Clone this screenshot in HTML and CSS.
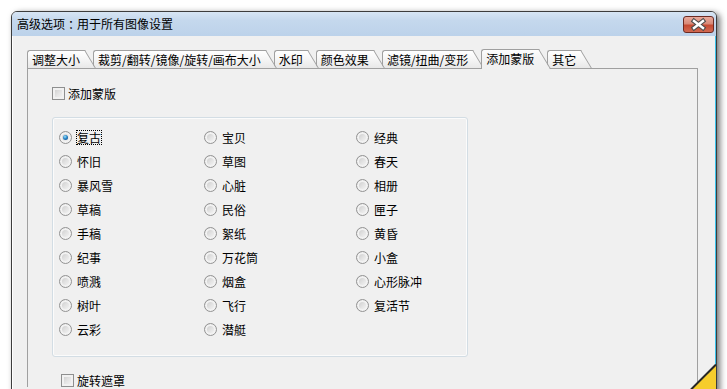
FILE: index.html
```html
<!DOCTYPE html>
<html lang="zh-CN">
<head>
  <meta charset="UTF-8">
  <title>高级选项</title>
  <link rel="stylesheet" href="styles.css">
</head>
<body>
  <div class="window">
    <div class="titlebar">
      <span class="title">高级选项<span class="colon">：</span>用于所有图像设置</span>
      <div class="close">
        <svg width="31" height="17" viewBox="0 0 31 17">
          <path d="M11 5 L20 12 M20 5 L11 12" stroke="#4b4b4b" stroke-width="4.6" stroke-linecap="square"/>
          <path d="M11 5 L20 12 M20 5 L11 12" stroke="#fff" stroke-width="2.4" stroke-linecap="square"/>
        </svg>
      </div>
    </div>

    <div class="client">
      <div class="tabs">
        <div class="tab">调整大小</div>
        <div class="tab">裁剪/翻转/镜像/旋转/画布大小</div>
        <div class="tab">水印</div>
        <div class="tab">颜色效果</div>
        <div class="tab">滤镜/扭曲/变形</div>
        <div class="tab active">添加蒙版</div>
        <div class="tab">其它</div>
      </div>

      <div class="panel">
        <label class="check"><span class="box"></span>添加蒙版</label>

        <div class="group">
          <label class="radio checked"><span class="dot"></span><span class="focus">复古</span></label>
          <label class="radio"><span class="dot"></span>怀旧</label>
          <label class="radio"><span class="dot"></span>暴风雪</label>
          <label class="radio"><span class="dot"></span>草稿</label>
          <label class="radio"><span class="dot"></span>手稿</label>
          <label class="radio"><span class="dot"></span>纪事</label>
          <label class="radio"><span class="dot"></span>喷溅</label>
          <label class="radio"><span class="dot"></span>树叶</label>
          <label class="radio"><span class="dot"></span>云彩</label>

          <label class="radio"><span class="dot"></span>宝贝</label>
          <label class="radio"><span class="dot"></span>草图</label>
          <label class="radio"><span class="dot"></span>心脏</label>
          <label class="radio"><span class="dot"></span>民俗</label>
          <label class="radio"><span class="dot"></span>絮纸</label>
          <label class="radio"><span class="dot"></span>万花筒</label>
          <label class="radio"><span class="dot"></span>烟盒</label>
          <label class="radio"><span class="dot"></span>飞行</label>
          <label class="radio"><span class="dot"></span>潜艇</label>

          <label class="radio"><span class="dot"></span>经典</label>
          <label class="radio"><span class="dot"></span>春天</label>
          <label class="radio"><span class="dot"></span>相册</label>
          <label class="radio"><span class="dot"></span>匣子</label>
          <label class="radio"><span class="dot"></span>黄昏</label>
          <label class="radio"><span class="dot"></span>小盒</label>
          <label class="radio"><span class="dot"></span>心形脉冲</label>
          <label class="radio"><span class="dot"></span>复活节</label>
        </div>

        <label class="check rotate"><span class="box"></span>旋转遮罩</label>
      </div>
    </div>
  </div>

  <svg class="corner" width="26" height="25" viewBox="0 0 26 25">
    <polygon points="2,25 26,1 26,25" fill="#f6cd2c"/>
    <line x1="1" y1="25.5" x2="26" y2="0.5" stroke="#262626" stroke-width="2"/>
  </svg>
</body>
</html>
```

FILE: styles.css
```css
html, body {
  overflow: hidden;
}

body {
  margin: 0;
  background: #fff;
  font-family: "Noto Sans CJK SC", "Liberation Sans", sans-serif;
  font-size: 12px;
  color: #000;
}

.window {
  margin: 11px 0 0 11px;
  width: 706px;
  height: 400px;
  box-sizing: border-box;
  border: 1px solid #3d3d3d;
  border-radius: 6px 6px 0 0;
  background: #f0f0f0;
  box-shadow: 3px 2px 6px rgba(0, 0, 0, 0.55);
  display: flex;
  flex-direction: column;
}

.titlebar {
  height: 24px;
  flex-shrink: 0;
  display: flex;
  align-items: center;
  justify-content: space-between;
  padding: 0 2px 0 5px;
  border-radius: 5px 5px 0 0;
  background: linear-gradient(to bottom, #d7e5f4 0%, #c5d8ed 35%, #bcd2ea 100%);
}

.title {
  line-height: 14px;
}

/* centred full-width colon, as in the original dialog font */
.colon {
  display: inline-block;
  width: 12px;
  text-align: center;
  font-feature-settings: "halt";
}

.close {
  width: 31px;
  height: 17px;
  box-sizing: border-box;
  border: 1px solid #6b2a22;
  border-radius: 3px;
  background: linear-gradient(to bottom, #e9a99b 0%, #d88a78 45%, #c54a32 55%, #d26a52 100%);
  display: flex;
  align-items: center;
  justify-content: center;
}

.close svg {
  margin: -1px;
}

.client {
  flex: 1;
  padding: 13px 17px 0 14px;
  border-left: 1px solid #fff;
  border-right: 1px solid #39c3ec;
}

/* tabs */
.tabs {
  display: flex;
  align-items: flex-end;
  height: 19px;
}

.tab {
  position: relative;
  height: 18px;
  box-sizing: border-box;
  padding: 0 5px 0 4px;
  margin-right: 8px;
  border-top: 1px solid #a0a0a0;
  border-left: 1px solid #a0a0a0;
  border-top-left-radius: 3px;
  background: linear-gradient(to bottom, #ffffff 0%, #f6f6f6 45%, #e8e8e8 100%);
  line-height: 17px;
  white-space: nowrap;
}

.tab::after {
  content: "";
  position: absolute;
  top: -1px;
  bottom: 0;
  right: 0;
  width: 14px;
  border-top: 1px solid #a0a0a0;
  border-right: 1px solid #a0a0a0;
  background: inherit;
  transform: skewX(31deg);
  transform-origin: top right;
  z-index: -1;
}

.tab:nth-child(1) { z-index: 7; }
.tab:nth-child(2) { z-index: 6; }
.tab:nth-child(3) { z-index: 5; }
.tab:nth-child(4) { z-index: 4; }
.tab:nth-child(5) { z-index: 3; }
.tab:nth-child(7) { z-index: 1; }

.tab.active {
  z-index: 10;
  height: 20px;
  margin-bottom: -1px;
  line-height: 18px;
  background: linear-gradient(to bottom, #fdfdfd 0%, #f4f4f4 40%, #f0f0f0 100%);
}

/* panel */
.panel {
  flex: 1;
  border: 1px solid #a0a0a0;
  border-bottom: 0;
  padding: 18px 0 0 24px;
  background: #f0f0f0;
}

.check {
  display: flex;
  align-items: center;
  height: 13px;
  line-height: 13px;
}

.check .box {
  width: 13px;
  height: 13px;
  box-sizing: border-box;
  margin-right: 3px;
  border: 1px solid #8e8f8f;
  background: linear-gradient(135deg, #c9c9c9 0%, #e4e4e4 50%, #f8f8f8 100%);
  box-shadow: inset 0 0 0 2px #f1f1f1;
}

.check.rotate {
  margin: 17px 0 0 9px;
}

.group {
  width: 416px;
  margin-top: 17px;
  box-sizing: border-box;
  padding: 7px 0 15px 6px;
  border: 1px solid #d3dde4;
  border-radius: 3px;
  box-shadow: inset 0 0 0 1px #fbfbfb;
  display: grid;
  grid-auto-flow: column;
  grid-template-rows: repeat(9, 24px);
  grid-template-columns: 145px 152px 1fr;
}

.radio {
  display: flex;
  align-items: center;
  line-height: 13px;
}

.radio .dot {
  position: relative;
  width: 13px;
  height: 13px;
  box-sizing: border-box;
  margin-right: 5px;
  border: 1px solid #939393;
  border-radius: 50%;
  background: linear-gradient(135deg, #c6c6c6 0%, #e2e2e2 50%, #fbfbfb 100%);
  box-shadow: inset 0 0 0 2px #f2f2f2;
}

.radio.checked .dot::after {
  content: "";
  position: absolute;
  left: 3px;
  top: 3px;
  width: 5px;
  height: 5px;
  border-radius: 50%;
  background: radial-gradient(circle at 40% 35%, #9be2fb 0%, #2a86c8 45%, #0b3f7c 100%);
}

.focus {
  outline: 1px dotted #000;
  height: 13px;
}

.corner {
  position: absolute;
  left: 690px;
  top: 364px;
}
```
